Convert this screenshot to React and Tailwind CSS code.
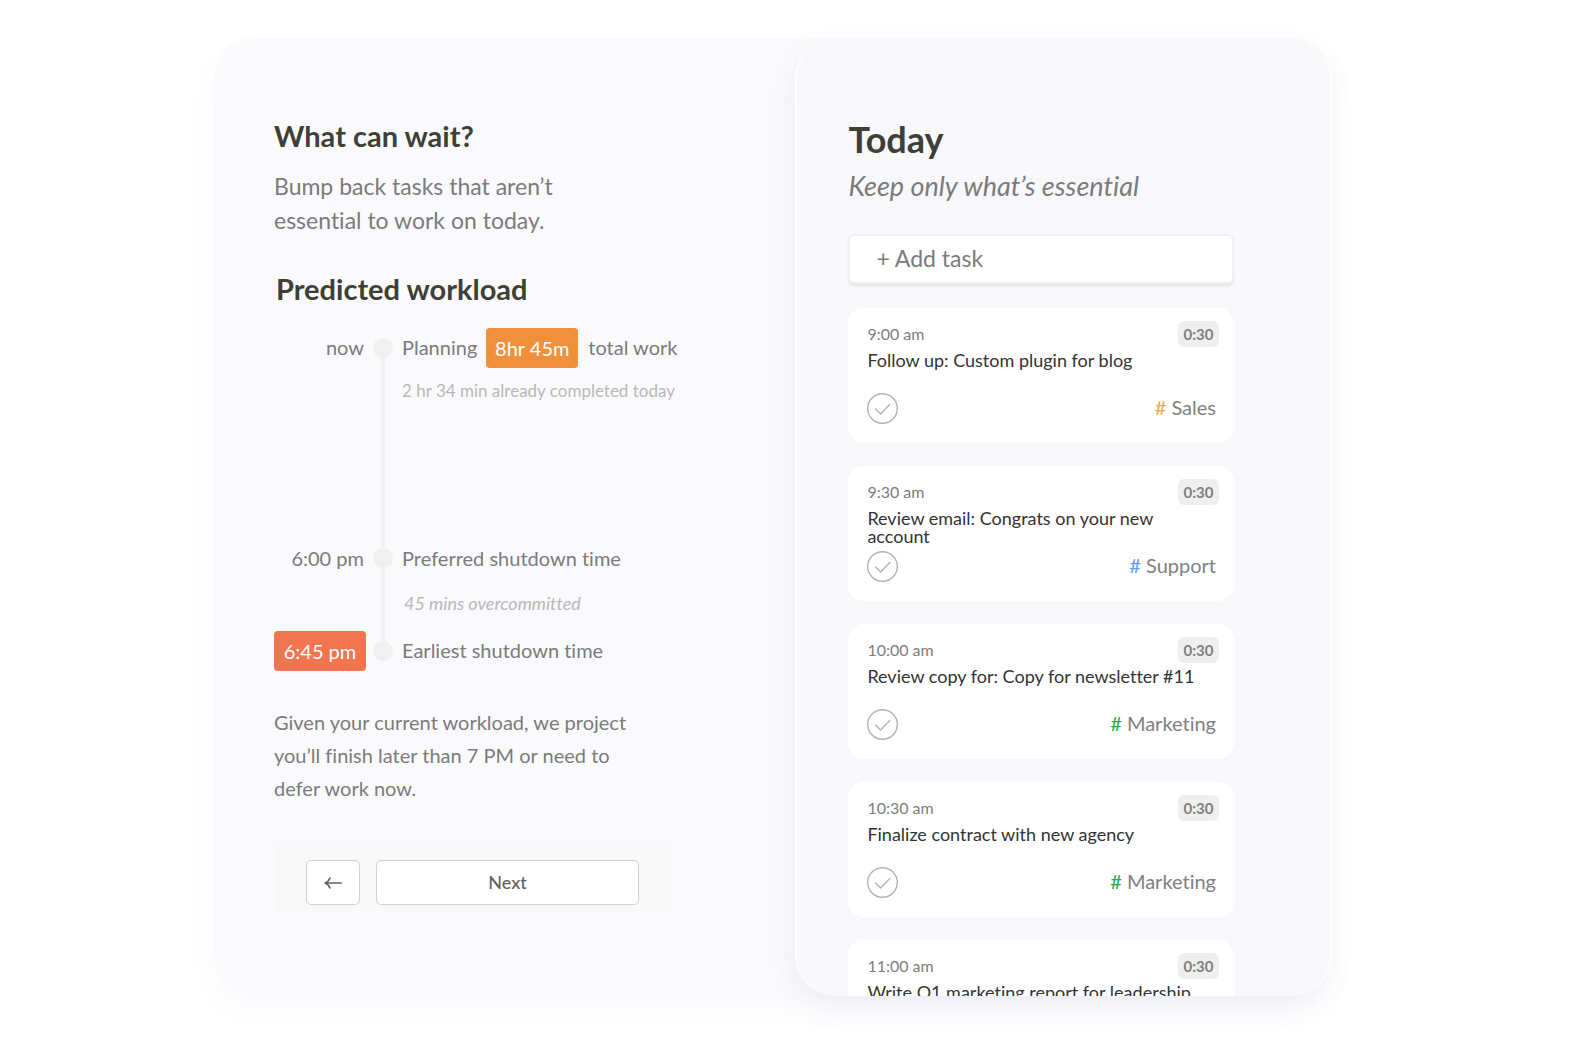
import React, { useState } from "react";

const tasks = [
  { id: 1, time: "9:00 am", duration: "0:30", title: "Follow up: Custom plugin for blog", tag: "Sales", tagColor: "text-[#fba24a]" },
  { id: 2, time: "9:30 am", duration: "0:30", title: "Review email: Congrats on your new account", tag: "Support", tagColor: "text-[#5c9dfb]" },
  { id: 3, time: "10:00 am", duration: "0:30", title: "Review copy for: Copy for newsletter #11", tag: "Marketing", tagColor: "text-[#22ab4b]" },
  { id: 4, time: "10:30 am", duration: "0:30", title: "Finalize contract with new agency", tag: "Marketing", tagColor: "text-[#22ab4b]" },
  { id: 5, time: "11:00 am", duration: "0:30", title: "Write Q1 marketing report for leadership", tag: "Marketing", tagColor: "text-[#22ab4b]" },
];

const TimelineRow = ({ label, height, first, last, children }) => (
  <li className={`flex ${height}`}>
    <div className="w-[92px] text-right">{label}</div>
    <div className="ml-[7px] mr-[9px] flex w-5 flex-col items-center">
      <div className={`h-[10px] w-1 ${first ? "" : "bg-[#f0f0f0]"}`} />
      <div className="size-5 rounded-full bg-[#f0f0f0]" />
      {!last && <div className="w-1 flex-1 bg-[#f0f0f0]" />}
    </div>
    <div className="whitespace-nowrap">{children}</div>
  </li>
);

const TaskCard = ({ task }) => {
  const [done, setDone] = useState(false);

  return (
    <li className="flex h-[135px] shrink-0 flex-col rounded-2xl bg-white pt-[13px] pr-[15px] pb-[19px] pl-[19px]">
      <div className="flex h-[26px] items-center justify-between">
        <span className="text-[16px] leading-6 text-[#7d7d7d]">{task.time}</span>
        <span className="w-[41px] rounded-md bg-[#efefef] text-center text-[15px] leading-[26px] font-bold text-[#808080]">
          {task.duration}
        </span>
      </div>
      <h3 className="mt-1 pr-5 text-[18px] leading-[18px] text-[#333]">
        {task.title}
      </h3>
      <div className="mt-auto flex items-start justify-between">
        <label className="relative cursor-pointer">
          <input
            type="checkbox"
            className="sr-only"
            aria-label={`Complete ${task.title}`}
            checked={done}
            onChange={() => setDone(!done)}
          />
          <svg
            viewBox="0 0 31 31"
            className="size-[31px]"
            fill="none"
            stroke={done ? "#22ab4b" : "#b3b3b3"}
            strokeWidth="1.4"
            strokeLinecap="round"
          >
            <circle cx="15.5" cy="15.5" r="14.8" />
            <path d="M8.6 15.9l5 5 9.2-9.400" />
          </svg>
        </label>
        <a href="#tag" className="pr-[3px] text-[20px] leading-7 text-[#808080]">
          <span className={task.tagColor}>#</span> {task.tag}
        </a>
      </div>
    </li>
  );
};

const PlanPanel = () => (
  <section className="min-w-0 flex-1 pt-[78px] pl-[60px] text-[#7b7b7b]">
    <h2 className="text-[29px] leading-[40px] font-bold text-[#3f3f38]">
      What can wait?
    </h2>
    <p className="mt-[13px] text-[23px] leading-[34px]">
      Bump back tasks that aren’t
      <br />
      essential to work on today.
    </p>
    <h2 className="mt-[32px] pl-0.5 text-[29px] leading-[40px] font-bold text-[#3f3f38]">
      Predicted workload
    </h2>

    <ol className="mt-[19px] text-[20px] leading-[38px]">
      <TimelineRow
        first
        height="h-[210px]"
        label={<span className="pr-0.5">now</span>}
      >
        <div className="flex">
          <span>Planning</span>
          <span className="ml-[9px] mr-[10px] w-[92px] rounded bg-[#f1903c] text-center leading-10 text-white">
            8hr 45m
          </span>
          <span>total work</span>
        </div>
        <p className="text-[17px] leading-[46px] text-[#b8b8b8]">
          2 hr 34 min already completed today
        </p>
      </TimelineRow>
      <TimelineRow
        height="h-[93px]"
        label={<span className="pr-0.5 leading-10">6:00 pm</span>}
      >
        <p className="leading-10">Preferred shutdown time</p>
        <p className="pl-0.5 text-[18px] leading-[50px] text-[#b8b8b8] italic">
          45 mins overcommitted
        </p>
      </TimelineRow>
      <TimelineRow
        last
        height="h-10"
        label={
          <span className="block rounded bg-[#f1754f] text-center leading-10 text-white">
            6:45 pm
          </span>
        }
      >
        <p>Earliest shutdown time</p>
      </TimelineRow>
    </ol>

    <p className="mt-[35px] text-[20px] leading-[33px]">
      Given your current workload, we project
      <br />
      you’ll finish later than 7 PM or need to
      <br />
      defer work now.
    </p>

    <div className="mt-9 flex w-[398px] gap-4 bg-[#f8f8f8] pt-[19px] pr-[33px] pb-[9px] pl-8">
      <button
        type="button"
        aria-label="Back"
        className="flex h-[45px] w-[54px] items-center justify-center rounded-[5px] border border-[#d2d2d2] bg-white"
      >
        <svg
          viewBox="0 0 18 12"
          className="h-3 w-[18px]"
          fill="none"
          stroke="#62625c"
          strokeWidth="1.6"
          strokeLinecap="round"
          strokeLinejoin="round"
        >
          <path d="M17.2 6H1M6 1C5 3.4 3.4 5.2 1 6c2.4.8 4 2.6 5 5" />
        </svg>
      </button>
      <button
        type="button"
        className="h-[45px] flex-1 rounded-[5px] border border-[#d2d2d2] bg-white text-[18px] font-medium text-[#62625c]"
      >
        Next
      </button>
    </div>
  </section>
);

const TodayPanel = () => (
  <section className="flex w-[48%] flex-col overflow-hidden rounded-[40px] border-x-2 border-white/70 bg-[#f8f8fb] bg-clip-padding pt-[77px] pr-[96px] pl-[51px] shadow-[-4px_12px_32px_-4px_rgba(100,105,170,0.10)]">
    <h1 className="text-[36px] leading-[48px] font-bold text-[#3f3f38]">
      Today
    </h1>
    <p className="mt-[5px] text-[27px] leading-[36px] text-[#7b7b7b] italic">
      Keep only what’s essential
    </p>
    <input
      type="text"
      aria-label="Add task"
      placeholder="+ Add task"
      className="mt-[30px] h-[50px] w-full shrink-0 rounded-md border-2 border-[#f0f0f1] bg-white px-[26px] pb-[3px] text-[23px] text-[#7b7b7b] shadow-[0_2px_2px_rgba(0,0,0,0.08)] outline-none placeholder:text-[#7b7b7b]"
    />
    <ul className="mt-6 flex flex-col gap-[23px]">
      {tasks.map((task) => (
        <TaskCard key={task.id} task={task} />
      ))}
    </ul>
  </section>
);

const App = () => (
  <main className="h-screen overflow-hidden bg-white pt-[38px] pr-[262px] pb-[42px] pl-[214px] font-['Lato',sans-serif] [font-variant-ligatures:none]">
    <div className="flex h-full rounded-[40px] bg-[#fafafc] shadow-[0_12px_32px_-4px_rgba(110,120,190,0.05)]">
      <PlanPanel />
      <TodayPanel />
    </div>
  </main>
);

export default App;
